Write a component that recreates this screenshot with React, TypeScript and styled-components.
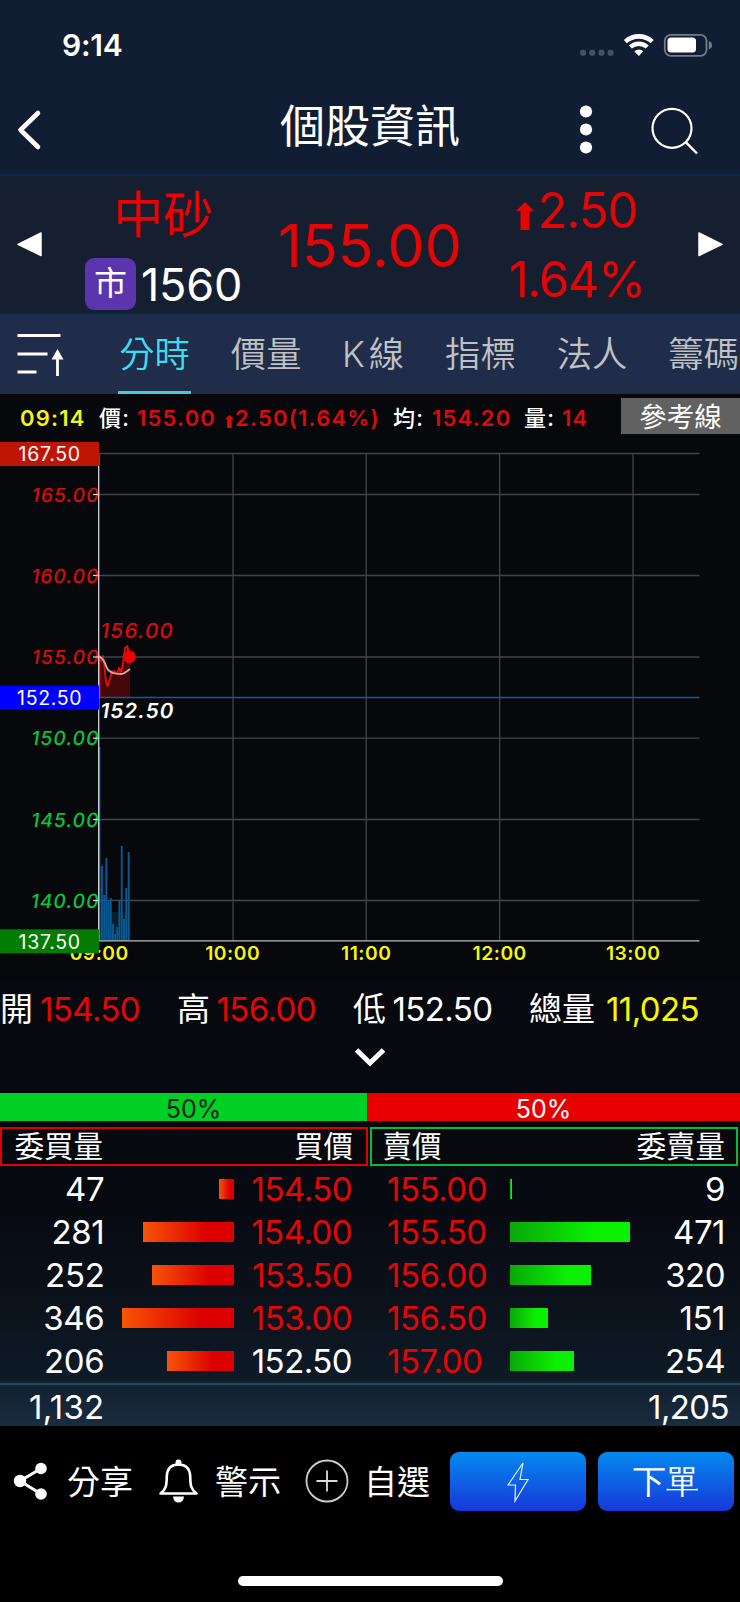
import React from 'react';
import styled, { createGlobalStyle } from 'styled-components';

const RED = '#e60505';
const CHART_RED = '#dc0a0a';
const GREEN = '#06c63a';
const YELLOW = '#f5f511';

const Global = createGlobalStyle`
  * { box-sizing: border-box; }
  body { margin: 0; background: #000; }
`;

const Screen = styled.div`
  width: 740px;
  height: 1602px;
  display: flex;
  flex-direction: column;
  overflow: hidden;
  background: #000;
  color: #fff;
  font-family: Inter, 'Noto Sans CJK TC', sans-serif;
  white-space: nowrap;
`;

const Txt = styled.span<{ $s: number; $c?: string; $w?: number; $ls?: number }>`
  font-size: ${(p) => p.$s}px;
  line-height: 1;
  color: ${(p) => p.$c ?? '#fff'};
  font-weight: ${(p) => p.$w ?? 400};
  letter-spacing: ${(p) => p.$ls ?? 0}px;
`;

const StatusBar = styled.div`
  height: 90px;
  display: flex;
  justify-content: space-between;
  align-items: center;
  padding: 0 28px 0 62px;
  background: #111d32;
`;

const Header = styled.header`
  height: 86px;
  display: flex;
  align-items: center;
  background: #111d32;
  border-bottom: 2px solid #0c2a4a;
`;

const HeaderSide = styled.div<{ $end?: boolean }>`
  width: 200px;
  height: 80px;
  padding-bottom: 4px;
  display: flex;
  align-items: center;
  justify-content: ${(p) => (p.$end ? 'flex-end' : 'flex-start')};
`;

const Title = styled.h1`
  flex: 1;
  margin: 0 0 10px;
  text-align: center;
  font-size: 45px;
  line-height: 60px;
  font-weight: 400;
`;

const Quote = styled.section`
  height: 139px;
  display: grid;
  grid-template-columns: 60px 200px 220px 194px 66px;
  align-items: center;
  background: #151f30;
  border-bottom: 2px solid #0b2d4e;
`;

const QuoteCol = styled.div<{ $gap: number; $top?: number; $left?: number }>`
  display: flex;
  flex-direction: column;
  align-items: center;
  gap: ${(p) => p.$gap}px;
  padding: ${(p) => p.$top ?? 0}px 0 0 ${(p) => p.$left ?? 0}px;
`;

const Line = styled.div<{ $gap?: number }>`
  display: flex;
  align-items: center;
  gap: ${(p) => p.$gap ?? 0}px;
`;

const QuoteArrow = styled.span`
  height: 28px;
  margin-top: 11px;
  display: flex;
`;

const Badge = styled.span`
  width: 51px;
  height: 52px;
  border-radius: 9px;
  background: #5c34ad;
  font-size: 33px;
  line-height: 50px;
  text-align: center;
`;

const Tabs = styled.nav`
  height: 79px;
  flex: none;
  display: flex;
  background: #1f2d4b;
  overflow: hidden;
`;

const TabIcon = styled.div`
  width: 98.7px;
  flex: none;
  padding: 18px 0 0 16px;
`;

const Tab = styled.div<{ $on?: boolean; $latin?: boolean }>`
  flex: none;
  height: 79px;
  margin: 0 19.5px;
  padding: 0 1px 0 ${(p) => (p.$latin ? 0.5 : 1)}px;
  font-size: 35.3px;
  line-height: 79px;
  color: ${(p) => (p.$on ? '#3fdcee' : '#bfc1c4')};
  font-weight: 350;
  border-bottom: 3px solid ${(p) => (p.$on ? '#4cc9d0' : 'transparent')};
  &::first-letter { letter-spacing: ${(p) => (p.$latin ? 4 : 0)}px; }
`;

const InfoRow = styled.div`
  height: 48px;
  display: flex;
  justify-content: space-between;
  align-items: flex-start;
  padding-left: 20px;
  background: #06080c;
`;

const InfoItems = styled.div`
  display: flex;
  align-items: center;
  height: 48px;
`;

const InfoCell = styled.span<{ $w: number; $c?: string }>`
  width: ${(p) => p.$w}px;
  font-size: 22px;
  line-height: 30px;
  font-weight: ${(p) => (p.$c ? 600 : 500)};
  letter-spacing: 1.2px;
  color: ${(p) => p.$c ?? '#fff'};
`;

const InfoArrow = styled.span`
  width: 10px;
  height: 13px;
  margin-top: 6px;
  display: flex;
`;

const RefButton = styled.button`
  width: 119px;
  height: 36px;
  margin: 4px 0 0;
  padding: 0;
  border: 0;
  background: #616161;
  color: #fff;
  font: 400 27.5px/32px 'Noto Sans CJK TC', sans-serif;
  padding-bottom: 2px;
`;

const ChartBox = styled.div`
  height: 538px;
  background: #06080c;
  svg { display: block; }
`;

const Stats = styled.div`
  height: 58px;
  display: flex;
  align-items: center;
  background: #07090e;
`;

const Stat = styled.div<{ $w: number; $gap: number }>`
  width: ${(p) => p.$w}px;
  display: flex;
  align-items: center;
  gap: ${(p) => p.$gap}px;
`;

const Expand = styled.div`
  height: 55px;
  display: flex;
  justify-content: center;
  padding-top: 8px;
  background: #07090e;
`;

const Ratio = styled.div`
  height: 28px;
  display: flex;
  text-align: center;
  font-size: 25px;
  line-height: 32px;
`;

const RatioPart = styled.div<{ $w: number; $bg: string; $c: string; $l?: number; $r?: number }>`
  width: ${(p) => p.$w}px;
  height: 28px;
  background: ${(p) => p.$bg};
  color: ${(p) => p.$c};
  padding: 0 ${(p) => p.$r ?? 0}px 0 ${(p) => p.$l ?? 0}px;
`;

const Book = styled.section`
  height: 305px;
  padding-top: 6px;
  background: linear-gradient(#07090e 0%, #080a12 30%, #0b121b 60%, #0e1a27 84%, #13202f 87%, #182d3f 100%);
`;

const BookHeads = styled.div`
  height: 41px;
  display: flex;
  align-items: flex-start;
  gap: 2px;
`;

const BookHead = styled.div<{ $c: string; $x: number }>`
  width: 368px;
  height: 39px;
  display: flex;
  justify-content: space-between;
  padding: 0 ${(p) => p.$x}px 0 ${(p) => p.$x - 0.5}px;
  border: 2px solid ${(p) => p.$c};
  font-size: 29.5px;
  line-height: 34px;
  font-weight: 400;
`;

const BookRow = styled.div`
  height: 43px;
  display: grid;
  grid-template-columns: 104.5px 129.5px 118.2px 34.8px 123px 215px;
  align-items: center;
`;

const Cell = styled.span<{ $c?: string; $left?: boolean; $ls?: number }>`
  font-size: 33px;
  line-height: 43px;
  letter-spacing: ${(p) => p.$ls ?? -0.5}px;
  text-align: ${(p) => (p.$left ? 'left' : 'right')};
  color: ${(p) => p.$c ?? '#fff'};
`;

const Bar = styled.div<{ $buy?: boolean }>`
  height: 20px;
  margin-bottom: 1.5px;
  justify-self: ${(p) => (p.$buy ? 'end' : 'start')};
  background: ${(p) =>
    p.$buy
      ? 'linear-gradient(90deg, #f95406, #dc0000 70%, #dc0000)'
      : 'linear-gradient(90deg, #08a808, #0bf000 70%, #0bf000)'};
`;

const AskCell = styled.div`
  display: flex;
  align-items: center;
  justify-content: space-between;
`;

const Totals = styled.div`
  height: 43px;
  display: flex;
  justify-content: space-between;
  padding: 1px 11px 0 29px;
  border-top: 2px solid #174e68;
`;

const Actions = styled.footer`
  height: 176px;
  display: flex;
  align-items: flex-start;
  padding: 26px 6px 0 12px;
  background: #000;
`;

const Action = styled.div<{ $w: number; $gap: number }>`
  width: ${(p) => p.$w}px;
  height: 59px;
  display: flex;
  align-items: center;
  gap: ${(p) => p.$gap}px;
  svg { margin-bottom: 1px; }
  span { margin-top: 2px; }
`;

const BlueButton = styled.button`
  width: 136px;
  height: 59px;
  margin: 0 12px 0 0;
  padding: 0;
  border: 0;
  border-radius: 9px;
  display: flex;
  align-items: center;
  justify-content: center;
  color: #fff;
  background: linear-gradient(#048af0, #1738d8);
  &:last-child { margin-right: 0; }
`;

const Home = styled.div`
  width: 265px;
  height: 10px;
  margin: -26px auto 0 238px;
  border-radius: 5px;
  background: #fff;
`;

const UpArrow = ({ w, h, c = RED }: { w: number; h: number; c?: string }) => (
  <svg width={w} height={h} viewBox="0 0 18 28" preserveAspectRatio="none">
    <path d="M9 0L18 9H13.5V28H4.5V9H0Z" fill={c} />
  </svg>
);

const bids: [string, number, string, string][] = [
  ['47', 15, '154.50', RED],
  ['281', 91, '154.00', RED],
  ['252', 82, '153.50', RED],
  ['346', 112, '153.00', RED],
  ['206', 67, '152.50', '#fff'],
];
const asks: [string, number, string][] = [
  ['155.00', 2, '9'],
  ['155.50', 120, '471'],
  ['156.00', 81, '320'],
  ['156.50', 38, '151'],
  ['157.00', 64, '254'],
];

const ticks: [string, number][] = [
  ['165.00', 52.5], ['160.00', 133.5], ['155.00', 215], ['150.00', 296.2], ['145.00', 377.5], ['140.00', 458.5],
];
const volumes: [number, number][] = [
  [98.5, 305], [101, 424], [103.2, 453], [105.4, 416], [107.6, 459], [109.8, 456], [112, 482],
  [114.2, 492], [116.3, 485], [118.5, 459], [120.8, 404], [123, 477], [125.3, 446], [127.7, 410],
];
const tags: [string, number, string][] = [
  ['167.50', 0, '#bf1507'], ['152.50', 243.5, '#0000fe'], ['137.50', 487.3, '#027d02'],
];

const slanted = (x: number, y: number) => `translate(${x} ${y}) skewX(-9)`;

const Chart = () => (
  <svg width="740" height="538" fontFamily="Inter, sans-serif">
    {[11.5, ...ticks.map((t) => t[1])].map((y) => (
      <line key={y} x1="99" x2="699.5" y1={y} y2={y} stroke="#404348" strokeWidth="1.3" />
    ))}
    {[233, 366.2, 499.6, 633].map((x) => (
      <line key={x} x1={x} x2={x} y1="11.5" y2="499" stroke="#404348" strokeWidth="1.3" />
    ))}
    {volumes.map(([x, y]) => (
      <rect key={x} x={x} y={y} width="1.9" height={498.5 - y} fill="#075a94" />
    ))}
    <rect x="99" y="470" width="31" height="28" fill="#075a94" opacity=".25" />
    <path d="M99 215L101 217L104 218L107 240L108 243L111 230L113 232L115 228L117 232L119 226L121 230L123 223L127 205L130 214V255H99Z" fill="#450607" />
    <line x1="99" x2="699.5" y1="255.5" y2="255.5" stroke="#17589a" strokeWidth="1.3" />
    <path d="M99.5 214V255" stroke="#c00808" strokeWidth="2" />
    <path d="M99 218L101 219L103 214L104.5 225L106 240L107.5 244L110 236L112 229L114 231L115 229L117 232L119 226L121 230L122.5 224L125 206L127.5 204L129 214" fill="none" stroke="#f00808" strokeWidth="1.8" strokeLinejoin="round" />
    <path d="M99 214C104 218 104 219 107 226C110 232 117 232 122 232C126 231 127 229 130 227" fill="none" stroke="#c4b2ae" strokeWidth="1.8" />
    <circle cx="129.5" cy="214.7" r="6.3" fill="#f00000" />
    <line x1="98.7" x2="98.7" y1="12" y2="499" stroke="#d5d8dc" strokeWidth="1.3" />
    <line x1="98" x2="699.5" y1="498.9" y2="498.9" stroke="#b9babb" strokeWidth="1.4" />
    {['09:00', '10:00', '11:00', '12:00', '13:00'].map((t, i) => (
      <text key={t} x={99.2 + i * 133.5} y="518.2" fontSize="19.3" fontWeight="600" letterSpacing=".5" textAnchor="middle" fill={YELLOW}>{t}</text>
    ))}
    {ticks.map(([t, y], i) => (
      <g key={t}>
        <text transform={slanted(98.7, y + 7.2)} fontSize="19.3" fontWeight="500" letterSpacing="1" textAnchor="end" fill={i < 3 ? CHART_RED : GREEN}>{t}</text>
        <line x1="93" x2="98" y1={y} y2={y} stroke="#ddd" strokeWidth="1.2" />
      </g>
    ))}
    {tags.map(([t, y, c]) => (
      <g key={t}>
        <rect x="0" y={y} width="99" height="24" fill={c} />
        <text x="49.7" y={y + 19.4} fontSize="19.5" letterSpacing=".7" textAnchor="middle" fill="#fff">{t}</text>
      </g>
    ))}
    <text transform={slanted(99.5, 196)} fontSize="20.8" fontWeight="500" letterSpacing="1.200" fill={CHART_RED}>156.00</text>
    <text transform={slanted(99.5, 276)} fontSize="20.8" fontWeight="600" letterSpacing="1" fill="#fff">152.50</text>
  </svg>
);

const stat: [string, string, string, number, number][] = [
  ['開', '154.50', RED, 177, 7],
  ['高', '156.00', RED, 176, 6.5],
  ['低', '152.50', '#fff', 176, 6.5],
  ['總量', '11,025', '#f8f500', 200, 11],
];

function AskSide({ width, qty }: { width: number; qty: string }) {
  return (
    <AskCell>
      <Bar style={{ width }} />
      <Cell>{qty}</Cell>
    </AskCell>
  );
}

export default function App() {
  return (
    <Screen>
      <Global />
      <StatusBar>
        <Txt $s={30} $w={600} $ls={-0.2}>9:14</Txt>
        <svg width="134" height="26" viewBox="578 32 134 26">
          {[583, 592.2, 601.4, 610.6].map((x) => (
            <rect key={x} x={x - 3} y="49.8" width="6" height="6" rx="2.3" fill="#485163" />
          ))}
          <path d="M625.4 41.6A19.7 19.7 0 0 1 652.2 41.6" fill="none" stroke="#fff" strokeWidth="4.6" />
          <path d="M630.4 47A12.3 12.3 0 0 1 647.2 47" fill="none" stroke="#fff" strokeWidth="4.4" />
          <path d="M634.3 51.3A6.5 6.5 0 0 1 643.3 51.3L638.8 56Z" fill="#fff" />
          <rect x="664.8" y="34.8" width="41.7" height="21" rx="6" fill="none" stroke="#747c8a" strokeWidth="1.8" />
          <rect x="667.5" y="37.5" width="28.5" height="15" rx="3.5" fill="#fff" />
          <path d="M708.8 41Q712 42 712 45.2T708.8 49.5Z" fill="#747c8a" />
        </svg>
      </StatusBar>
      <Header>
        <HeaderSide>
          <svg width="60" height="60" viewBox="0 100 60 60">
            <path d="M38 113L20.5 130L38 147" fill="none" stroke="#fff" strokeWidth="4.6" strokeLinecap="round" strokeLinejoin="round" />
          </svg>
        </HeaderSide>
        <Title>個股資訊</Title>
        <HeaderSide $end>
          <svg width="170" height="60" viewBox="570 100.5 170 60">
            {[112, 130, 148].map((y) => <circle key={y} cx="586" cy={y} r="6.1" fill="#fff" />)}
            <circle cx="672" cy="128.8" r="19.5" fill="none" stroke="#fff" strokeWidth="2.2" />
            <path d="M686 142.8L697 154" stroke="#fff" strokeWidth="2.4" />
          </svg>
        </HeaderSide>
      </Header>
      <Quote>
        <svg width="60" height="30" viewBox="0 230 60 30">
          <path d="M41 233V255.5L18 244.3Z" fill="#fff" stroke="#fff" strokeWidth="1.5" strokeLinejoin="round" />
        </svg>
        <QuoteCol $gap={18} $top={11} $left={7}>
          <Txt $s={50} $c="#f00000">中砂</Txt>
          <Line $gap={5}>
            <Badge>市</Badge>
            <Txt $s={45} $ls={-0.2}>1560</Txt>
          </Line>
        </QuoteCol>
        <QuoteCol $gap={0} $top={1}><Txt $s={59} $c={RED}>155.00</Txt></QuoteCol>
        <QuoteCol $gap={20} $top={1}>
          <Line $gap={3.5}><QuoteArrow><UpArrow w={18} h={28} /></QuoteArrow><Txt $s={49} $c={RED} $ls={-1}>2.50</Txt></Line>
          <Txt $s={49} $c={RED} $ls={-1.4}>1.64%</Txt>
        </QuoteCol>
        <svg width="66" height="30" viewBox="674 230 66 30">
          <path d="M699 233V255.5L722 244.3Z" fill="#fff" stroke="#fff" strokeWidth="1.5" strokeLinejoin="round" />
        </svg>
      </Quote>
      <Tabs>
        <TabIcon>
          <svg width="50" height="48" viewBox="16.5 333 50 48">
            <path d="M18 335.5H61M18 354H48M18 372H37M58 356V376" stroke="#fff" strokeWidth="2.8" fill="none" />
            <path d="M58 349L64 359.5H52Z" fill="#fff" />
          </svg>
        </TabIcon>
        <Tab $on>分時</Tab>
        <Tab>價量</Tab>
        <Tab $latin>K線</Tab>
        <Tab>指標</Tab>
        <Tab>法人</Tab>
        <Tab>籌碼</Tab>
      </Tabs>
      <InfoRow>
        <InfoItems>
          <InfoCell $w={79} $c={YELLOW}>09:14</InfoCell>
          <InfoCell $w={38}>價:</InfoCell>
          <InfoCell $w={88} $c={CHART_RED}>155.00</InfoCell>
          <InfoArrow><UpArrow w={9} h={13} c={CHART_RED} /></InfoArrow>
          <InfoCell $w={158} $c={CHART_RED}>2.50(1.64%)</InfoCell>
          <InfoCell $w={39}>均:</InfoCell>
          <InfoCell $w={92} $c={CHART_RED}>154.20</InfoCell>
          <InfoCell $w={38}>量:</InfoCell>
          <InfoCell $w={30} $c={CHART_RED}>14</InfoCell>
        </InfoItems>
        <RefButton>參考線</RefButton>
      </InfoRow>
      <ChartBox><Chart /></ChartBox>
      <Stats>
        {stat.map(([k, v, c, w, g]) => (
          <Stat key={k} $w={w} $gap={g}><Txt $s={33}>{k}</Txt><Txt $s={33} $c={c} $ls={-0.6}>{v}</Txt></Stat>
        ))}
      </Stats>
      <Expand>
        <svg width="34" height="24" viewBox="0 0 34 24">
          <path d="M3.5 4L17 17L30.5 4" fill="none" stroke="#fff" strokeWidth="5" />
        </svg>
      </Expand>
      <Ratio>
        <RatioPart $w={367} $bg="#00cf26" $c="#06200a" $l={20}>50%</RatioPart>
        <RatioPart $w={373} $bg="#e80000" $c="#fff" $r={20}>50%</RatioPart>
      </Ratio>
      <Book>
        <BookHeads>
          <BookHead $c="#e00000" $x={13}><span>委買量</span><span>買價</span></BookHead>
          <BookHead $c="#08ba35" $x={11}><span>賣價</span><span>委賣量</span></BookHead>
        </BookHeads>
        {bids.map(([q, w, p, c], i) => (
          <BookRow key={p}>
            <Cell $ls={-0.3}>{q}</Cell>
            <Bar $buy style={{ width: w }} />
            <Cell $c={c}>{p}</Cell>
            <span />
            <Cell $left $c={RED}>{asks[i][0]}</Cell>
            <AskSide width={asks[i][1]} qty={asks[i][2]} />
          </BookRow>
        ))}
        <Totals><Cell $ls={0.3}>1,132</Cell><Cell $ls={-0.6}>1,205</Cell></Totals>
      </Book>
      <Actions>
        <Action $w={144} $gap={18}>
          <svg width="37" height="40" viewBox="12 1461 37 40">
            <path d="M41 1468.5L20 1481L41 1494" fill="none" stroke="#fff" strokeWidth="3" />
            <circle cx="41" cy="1468.5" r="5.8" fill="#fff" /><circle cx="20" cy="1481" r="6.2" fill="#fff" /><circle cx="41" cy="1494" r="5.8" fill="#fff" />
          </svg>
          <Txt $s={33}>分享</Txt>
        </Action>
        <Action $w={149} $gap={15}>
          <svg width="44" height="46" viewBox="156.5 1458 44 46">
            <path d="M161 1493.5C167.5 1488.5 167 1484 167.3 1476C167.8 1468 172 1464.5 179 1464.5S190.2 1468 190.7 1476C191 1484 190.5 1488.5 197 1493.5Z" fill="none" stroke="#fff" strokeWidth="2.6" strokeLinejoin="round" />
            <circle cx="179" cy="1462.5" r="3" fill="#fff" /><path d="M173.5 1496.5H184.5Q184 1502.5 179 1502.5Q174 1502.5 173.5 1496.5Z" fill="#fff" />
          </svg>
          <Txt $s={33}>警示</Txt>
        </Action>
        <Action $w={145} $gap={15}>
          <svg width="44" height="44" viewBox="0 0 44 44">
            <circle cx="22" cy="22" r="20.5" fill="none" stroke="#ccc" strokeWidth="1.8" />
            <path d="M22 11.5V32.5M11.5 22H32.5" stroke="#ddd" strokeWidth="1.8" />
          </svg>
          <Txt $s={33}>自選</Txt>
        </Action>
        <BlueButton>
          <svg width="24" height="42" viewBox="0 0 24 42">
            <path d="M17 2L2 24H9.5L9 40L22 18.5H14Z" fill="none" stroke="#e6f3ff" strokeWidth="1.2" />
          </svg>
        </BlueButton>
        <BlueButton><Txt $s={33}>下單</Txt></BlueButton>
      </Actions>
      <Home />
    </Screen>
  );
}
